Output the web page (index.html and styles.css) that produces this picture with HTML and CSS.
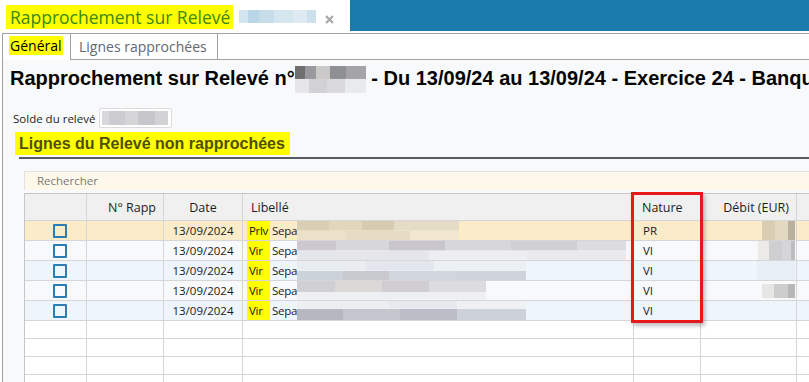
FILE: index.html
```html
<!DOCTYPE html>
<html lang="fr">
<head>
    <meta charset="UTF-8">
    <title>Rapprochement sur Relevé</title>
    <link rel="stylesheet" href="styles.css">
</head>
<body>
    <div class="topbar">
        <div class="doc-tab">
            <span class="hl title">Rapprochement sur Relevé</span>
            <span class="blur blur-title"></span>
            <svg class="close" width="9" height="9" viewBox="0 0 9 9"><path d="M1 1L8 8M8 1L1 8" stroke="#a8a8a8" stroke-width="2.2"/></svg>
        </div>
        <div class="topfill"></div>
    </div>

    <div class="tabs">
        <div class="tab tab-on"><span class="hl">Général</span></div>
        <div class="tab">Lignes rapprochées</div>
        <div class="tab-rest"></div>
    </div>

    <div class="content">
        <h1>Rapprochement sur Relevé n°<span class="blur blur-num"></span> - Du 13/09/24 au 13/09/24 - Exercice 24 - Banque</h1>

        <div class="solde">
            <span class="solde-lbl">Solde du relevé</span>
            <span class="solde-box"><span class="blur blur-solde"></span></span>
        </div>

        <h2><span class="hl">Lignes du Relevé non rapprochées</span></h2>
        <div class="rule"></div>

        <div class="search">Rechercher</div>

        <div class="grid-wrap">
            <table class="grid">
                <colgroup>
                    <col class="c-chk"><col class="c-rapp"><col class="c-date"><col class="c-lib"><col class="c-nat"><col class="c-deb"><col class="c-end">
                </colgroup>
                <thead>
                    <tr>
                        <th></th>
                        <th class="right">N° Rapp</th>
                        <th class="center">Date</th>
                        <th>Libellé</th>
                        <th>Nature</th>
                        <th class="right">Débit (EUR)</th>
                        <th></th>
                    </tr>
                </thead>
                <tbody>
                    <tr class="sel">
                        <td><span class="chk"></span></td>
                        <td></td>
                        <td class="center">13/09/2024</td>
                        <td><div class="lib"><span class="code">Prlv</span><span class="sepa">Sepa</span><span class="blur b-r1"></span></div></td>
                        <td>PR</td>
                        <td class="right"><span class="blur d-r1"></span></td>
                        <td></td>
                    </tr>
                    <tr>
                        <td><span class="chk"></span></td>
                        <td></td>
                        <td class="center">13/09/2024</td>
                        <td><div class="lib"><span class="code">Vir</span><span class="sepa">Sepa</span><span class="blur b-r2"></span></div></td>
                        <td>VI</td>
                        <td class="right"><span class="blur d-r2"></span></td>
                        <td></td>
                    </tr>
                    <tr class="alt">
                        <td><span class="chk"></span></td>
                        <td></td>
                        <td class="center">13/09/2024</td>
                        <td><div class="lib"><span class="code">Vir</span><span class="sepa">Sepa</span><span class="blur b-r3"></span></div></td>
                        <td>VI</td>
                        <td class="right"><span class="blur d-r3"></span></td>
                        <td></td>
                    </tr>
                    <tr>
                        <td><span class="chk"></span></td>
                        <td></td>
                        <td class="center">13/09/2024</td>
                        <td><div class="lib"><span class="code">Vir</span><span class="sepa">Sepa</span><span class="blur b-r4"></span></div></td>
                        <td>VI</td>
                        <td class="right"><span class="blur d-r4"></span></td>
                        <td></td>
                    </tr>
                    <tr class="alt">
                        <td><span class="chk"></span></td>
                        <td></td>
                        <td class="center">13/09/2024</td>
                        <td><div class="lib"><span class="code">Vir</span><span class="sepa">Sepa</span><span class="blur b-r5"></span></div></td>
                        <td>VI</td>
                        <td></td>
                        <td></td>
                    </tr>
                    <tr class="empty"><td></td><td></td><td></td><td></td><td></td><td></td><td></td></tr>
                    <tr class="empty"><td></td><td></td><td></td><td></td><td></td><td></td><td></td></tr>
                    <tr class="empty"><td></td><td></td><td></td><td></td><td></td><td></td><td></td></tr>
                    <tr class="empty"><td></td><td></td><td></td><td></td><td></td><td></td><td></td></tr>
                </tbody>
            </table>
            <div class="mark"></div>
        </div>
    </div>
</body>
</html>
```

FILE: styles.css
```css
body {
    margin: 0;
    width: 809px;
    height: 382px;
    overflow: hidden;
    background: #fff;
    font-family: "Open Sans", "Noto Sans", sans-serif;
    color: #1e1e1e;
}
.hl {
    background: #ffff00;
}
.blur {
    display: inline-block;
}

/* barre du haut */
.topbar {
    display: flex;
    height: 32px;
}
.doc-tab {
    width: 350px;
    display: flex;
    align-items: flex-start;
    padding: 5px 0 0 6px;
    box-sizing: border-box;
}
.title {
    font-size: 17.5px;
    line-height: 24px;
    padding: 0 3px 0 4px;
    color: #3a8a0e;
}
.blur-title {
    width: 77px;
    height: 13px;
    margin: 5px 0 0 6px;
    background: linear-gradient(90deg, #d3e5ef 0 12%, #b9d6e6 12% 26%, #c7dde9 26% 45%, #d5e6ef 45% 70%, #dfeaf2 70% 88%, #cde1ec 88%);
}
.close {
    margin: 10px 0 0 9px;
}
.topfill {
    flex: 1;
    height: 31px;
    background: #1a7aab;
}

/* onglets */
.tabs {
    display: flex;
    height: 27px;
    margin-left: 2px;
    margin-top: 1px;
    font-size: 14px;
}
.tab {
    border: 1px solid #a0a0a0;
    border-left: none;
    padding: 0 10px 0 8px;
    line-height: 25px;
    color: #626874;
    background: #fff;
}
.tab-on {
    border-left: 1px solid #a0a0a0;
    border-bottom: none;
    width: 69px;
    padding: 4px 0 0 6px;
    box-sizing: border-box;
    color: #000;
    line-height: 16px;
}
.tab-on .hl {
    padding: 0 1px;
}
.tab-rest {
    flex: 1;
    border-top: 1px solid #a0a0a0;
    border-bottom: 1px solid #a0a0a0;
    background: #fff;
}

/* contenu */
.content {
    margin-left: 2px;
    border-left: 1px solid #a0a0a0;
    background: #f8f9fb;
    height: 322px;
    overflow: hidden;
}
h1 {
    margin: 0;
    padding: 6px 0 0 7px;
    height: 24px;
    font-family: "Liberation Sans", Arial, sans-serif;
    font-size: 20px;
    line-height: 24px;
    font-weight: bold;
    color: #050505;
    white-space: nowrap;
}
.blur-num {
    width: 71px;
    height: 27px;
    vertical-align: -8px;
    background:
        linear-gradient(90deg, #6f6f6f 0 14%, #9a9a9e 14% 30%, #cbc8c8 30% 50%, #8f9094 50% 72%, #a4a4a8 72% 100%) top / 100% 48% no-repeat,
        linear-gradient(90deg, #e6e6e8 0 20%, #d2d2d4 20% 45%, #dadadd 45% 70%, #e9eaec 70%) bottom / 100% 52% no-repeat;
}
.solde {
    display: flex;
    align-items: center;
    margin-top: 18px;
    padding-left: 10px;
    height: 20px;
    font-size: 11.5px;
}
.solde-lbl {
    width: 86px;
}
.solde-box {
    width: 73px;
    height: 20px;
    box-sizing: border-box;
    border: 1px solid #dcdcdc;
    border-radius: 2px;
    background: #fff;
    padding: 2px 0 0 2px;
}
.blur-solde {
    width: 66px;
    height: 14px;
    background: linear-gradient(90deg, #d8d8dc 0 10%, #cbcbd0 10% 35%, #d5d5d8 35% 55%, #c7c7cb 55% 80%, #d2d2d5 80%);
}
h2 {
    margin: 4px 0 0 12px;
    font-family: "Liberation Sans", Arial, sans-serif;
    font-size: 16px;
    font-weight: bold;
    line-height: 23px;
    height: 23px;
}
h2 .hl {
    display: inline-block;
    padding: 0 5px 0 4px;
    color: #4f4f08;
}
.rule {
    margin: 2px 0 0 16px;
    height: 2px;
    background: #565b61;
}
.search {
    margin: 12px 0 0 21px;
    height: 18px;
    line-height: 18px;
    border-top: 1px solid #e2e2e2;
    border-left: 1px solid #e2e2e2;
    background: #fdf8ea;
    padding-left: 12px;
    font-size: 11.5px;
    color: #7a7a7a;
}

/* grille */
.grid-wrap {
    position: relative;
    margin: 3px 0 0 21px;
}
.grid {
    border-collapse: separate;
    border-spacing: 0;
    table-layout: fixed;
    width: 905px;
    border-left: 1px solid #c6c6c6;
    border-top: 1px solid #c6c6c6;
}
.c-chk { width: 62px; }
.c-rapp { width: 77px; }
.c-date { width: 79px; }
.c-lib { width: 391px; }
.c-nat { width: 67px; }
.c-deb { width: 96px; }
.c-end { width: 133px; }
.grid th, .grid td {
    border-right: 1px solid #d6d6d6;
    border-bottom: 1px solid #d6d6d6;
    padding: 0 8px;
    text-align: left;
    white-space: nowrap;
    overflow: hidden;
}
.grid th {
    height: 26px;
    background: #f0f0f0;
    font-weight: normal;
    font-size: 12.5px;
    color: #1e1e1e;
}
.grid td {
    height: 19px;
    font-size: 11.5px;
    color: #1a1a1a;
}
.grid .right { text-align: right; padding-right: 7px; }
.grid .center { text-align: center; }
.grid tr.sel td { background: #fbecc9; }
.grid tr.alt td { background: #eef5fd; }
.grid tr.empty td { height: 17px; background: #fff; }
.grid td:first-child { text-align: center; padding: 0 0 0 9px; }
.grid td:nth-child(4) { padding: 0 0 0 4px; font-size: 11.5px; letter-spacing: -0.3px; }
.grid td:nth-child(5) { padding-left: 9px; }
.grid td:nth-child(6) { padding-right: 1px; }

.chk {
    display: inline-block;
    width: 14px;
    height: 14px;
    box-sizing: border-box;
    border: 2px solid #2c7db3;
    border-radius: 1px;
    vertical-align: middle;
}
.lib {
    display: flex;
    align-items: center;
    height: 19px;
}
.code {
    flex: none;
    width: 21px;
    padding-left: 2px;
    line-height: 20px;
    height: 20px;
    background: #ffff00;
}
.sepa {
    flex: none;
    width: 25px;
    padding-left: 2px;
}
.b-r1 {
    width: 162px;
    height: 19px;
    background:
        linear-gradient(90deg, #d9cfb4 0 20%, #e1d7be 20% 40%, #d6ccb3 40% 60%, #e5dcc5 60% 100%) top / 100% 50% no-repeat,
        linear-gradient(90deg, #ebe1c9 0 30%, #e6dcc3 30% 70%, #f2e8d1 70%) bottom / 100% 50% no-repeat;
}
.b-r2 {
    width: 329px;
    height: 19px;
    background:
        linear-gradient(90deg, #cdc7cf 0 12%, #d8d8dc 12% 28%, #c9c5cc 28% 45%, #d7d7db 45% 65%, #cfcfd4 65% 85%, #dcdce0 85%) top / 100% 50% no-repeat,
        linear-gradient(90deg, #e5e6ea 0 40%, #eceef1 40% 70%, #e8eaee 70%) bottom / 100% 50% no-repeat;
}
.b-r3 {
    width: 229px;
    height: 19px;
    background:
        linear-gradient(90deg, #e9ecf1 0 30%, #e3e6ec 30% 60%, #eceff3 60%) top / 100% 50% no-repeat,
        linear-gradient(90deg, #ccd2da 0 20%, #c7c9cf 20% 40%, #d1d5dc 40% 70%, #cfd3da 70%) bottom / 100% 50% no-repeat;
}
.b-r4 {
    width: 189px;
    height: 19px;
    background:
        linear-gradient(90deg, #d0cfd3 0 20%, #dcd8d8 20% 45%, #cfcdd0 45% 70%, #dcdce0 70%) top / 100% 60% no-repeat,
        linear-gradient(90deg, #eeeff2 0 100%) bottom / 100% 40% no-repeat;
}
.b-r5 {
    width: 229px;
    height: 19px;
    background:
        linear-gradient(90deg, #eceef2 0 40%, #e6e9ee 40% 70%, #eef0f4 70%) top / 100% 40% no-repeat,
        linear-gradient(90deg, #b7b7c0 0 20%, #c4c6ce 20% 45%, #babcc6 45% 70%, #ccd1da 70%) bottom / 100% 60% no-repeat;
}
.d-r1 {
    width: 33px;
    height: 19px;
    vertical-align: middle;
    background: linear-gradient(90deg, #d9ceb2 0 40%, #e3d9c0 40% 80%, #b9b0a0 80%);
}
.d-r2 {
    width: 37px;
    height: 19px;
    vertical-align: middle;
    background: linear-gradient(90deg, #eceae6 0 30%, #cfcfd1 30% 65%, #d6d6d8 65% 88%, #bdbdbf 88%);
}
.d-r3 {
    width: 38px;
    height: 19px;
    vertical-align: middle;
    background: #e8eef6;
}
.d-r4 {
    width: 33px;
    height: 14px;
    vertical-align: middle;
    background: linear-gradient(90deg, #e6e6e4 0 35%, #cdcdcd 35% 80%, #b8b8b8 80%);
}

/* cadre rouge autour de la colonne Nature */
.mark {
    position: absolute;
    left: 607px;
    top: -1px;
    width: 72px;
    height: 131px;
    box-sizing: border-box;
    border: 3px solid #e8171c;
    box-shadow: 2px 3px 4px rgba(0, 0, 0, 0.25);
}
```
